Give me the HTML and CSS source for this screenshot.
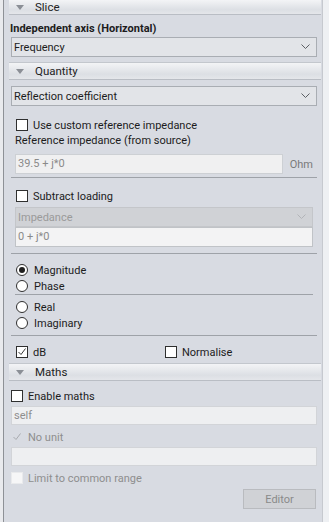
FILE: index.html
```html
<!DOCTYPE html>
<html lang="en">
<head>
  <meta charset="UTF-8">
  <title>Slice settings</title>
  <link rel="stylesheet" href="styles.css">
</head>
<body>
  <div class="window">
    <div class="rail"></div>

    <div class="panel">
      <!-- Slice -->
      <div class="head head-first"><span class="tri"></span>Slice</div>
      <div class="body">
        <div class="label-bold">Independent axis (Horizontal)</div>
        <div class="select mt1"><span>Frequency</span><svg class="chev" width="9" height="6" viewBox="0 0 9 6"><polyline points="0.5,0.5 4.5,4.5 8.5,0.5"/></svg></div>
      </div>

      <!-- Quantity -->
      <div class="head mt5"><span class="tri"></span>Quantity</div>
      <div class="body">
        <div class="select mt6"><span>Reflection coefficient</span><svg class="chev" width="9" height="6" viewBox="0 0 9 6"><polyline points="0.5,0.5 4.5,4.5 8.5,0.5"/></svg></div>

        <div class="group">
          <div class="row mt11"><span class="box"></span>Use custom reference impedance</div>
          <div class="row row-label">Reference impedance (from source)</div>
          <div class="field-line mt6">
            <div class="field field-dim">39.5 + j*0</div>
            <span class="unit">Ohm</span>
          </div>
        </div>

        <div class="sep mt3"></div>

        <div class="group">
          <div class="row mt10"><span class="box"></span>Subtract loading</div>
          <div class="select select-off mt3"><span>Impedance</span><svg class="chev" width="9" height="6" viewBox="0 0 9 6"><polyline points="0.5,0.5 4.5,4.5 8.5,0.5"/></svg></div>
          <div class="field field-soft">0 + j*0</div>
        </div>

        <div class="sep mt6"></div>

        <div class="group">
          <div class="row mt8"><span class="radio on"></span>Magnitude</div>
          <div class="row"><span class="radio"></span>Phase</div>
          <div class="sep"></div>
          <div class="row mt4"><span class="radio"></span>Real</div>
          <div class="row"><span class="radio"></span>Imaginary</div>
        </div>

        <div class="sep mt4"></div>

        <div class="group">
          <div class="row mt8">
            <div class="pair"><span class="box"><svg width="10" height="10" viewBox="0 0 10 10"><polyline points="1.5,5 4,7.5 8.5,1.5"/></svg></span>dB</div>
            <div class="pair"><span class="box"></span>Normalise</div>
          </div>
        </div>
      </div>

      <!-- Maths -->
      <div class="head mt3"><span class="tri"></span>Maths</div>
      <div class="body">
        <div class="row row-tight mt7"><span class="box"></span>Enable maths</div>
        <div class="field field-off mt2">self</div>
        <div class="row row-tight row-off mt4"><span class="box box-off"><svg width="10" height="10" viewBox="0 0 10 10"><polyline points="1.5,5 4,7.5 8.5,1.5"/></svg></span>No unit</div>
        <div class="field field-off mt2"></div>
        <div class="row row-tight row-off mt4"><span class="box box-blank"></span>Limit to common range</div>
        <div class="actions mt3"><button class="btn" disabled>Editor</button></div>
      </div>
    </div>

    <div class="gutter"></div>
  </div>
</body>
</html>
```

FILE: styles.css
```css
/* Panel de propiedades, estilo Windows clasico */
body {
  margin: 0;
  font-family: Roboto, "Noto Sans", sans-serif;
  font-size: 11px;
  color: #1c1c1c;
  background: #eef0f2;
}

.window {
  display: flex;
  height: 522px;
  overflow: hidden;
}

.rail {
  width: 3px;
  background: #e9eaed;
  border-right: 1px solid #8e9196;
}

.panel {
  width: 318px;
  background: #d8dbe2;
}

.gutter {
  flex: 1;
  background: #eef0f3;
  border-left: 1px solid #c6c9cf;
}

/* Cabeceras de seccion */
.head {
  display: flex;
  align-items: center;
  height: 18px;
  margin-left: 5px;
  margin-right: 1px;
  padding-left: 7px;
  box-sizing: border-box;
  background: linear-gradient(#f3f4f6, #dcdfe4 70%, #e4e6ea);
  border-top: 1px solid #c3c7cd;
  border-bottom: 1px solid #b9bdc4;
  color: #222;
  font-size: 11.5px;
}

.head-first {
  height: 15px;
  border-top: none;
}

.tri {
  width: 0;
  height: 0;
  border-left: 4px solid transparent;
  border-right: 4px solid transparent;
  border-top: 5px solid #8b8f96;
  margin-right: 11px;
}

.body {
  padding: 0 5px 0 7px;
}

.label-bold {
  font-weight: bold;
  height: 14px;
  line-height: 14px;
  margin-top: 7px;
  margin-left: -1px;
}

/* Desplegables y campos */
.select {
  display: flex;
  align-items: center;
  justify-content: space-between;
  height: 20px;
  box-sizing: border-box;
  padding: 0 6px 0 2px;
  border: 1px solid #a9adb3;
  background: #e2e4e8;
}

.chev {
  fill: none;
  stroke: #5c5f64;
  stroke-width: 1;
}

.select-off {
  background: #d0d2d6;
  border-color: #c4c6ca;
  color: #9a9a9a;
}

.select-off .chev {
  stroke: #b2b4b8;
}

.field {
  height: 20px;
  line-height: 18px;
  box-sizing: border-box;
  padding: 0 2px;
  border: 1px solid #b8bbc0;
  background: #f3f3f4;
  color: #8a8a8a;
}

.field-line {
  display: flex;
  align-items: center;
  gap: 7px;
}

.field-dim {
  width: 270px;
  background: #f0f0f1;
  border-color: #cdd0d4;
}

.unit {
  color: #7a7a7a;
}

.field-soft {
  border-color: #c0c3c7;
}

.field-off {
  height: 19px;
  line-height: 17px;
  background: #eeeff1;
  border-color: #d2d4d8;
  color: #8e8e8e;
}

/* Grupos internos */
.group {
  padding: 0 4px;
}

.sep {
  height: 1px;
  background: #9ea2a8;
}

.row {
  display: flex;
  align-items: center;
  height: 16px;
}

.row-label {
  height: 15px;
}

.row-tight .box {
  margin-left: 0;
  margin-right: 5px;
}

.row-off {
  color: #8e8e8e;
}

.pair {
  display: flex;
  align-items: center;
  width: 155px;
}

.box {
  width: 10px;
  height: 10px;
  margin-left: 1px;
  margin-right: 5px;
  border: 1px solid #2f2f2f;
  background: #fff;
  display: flex;
  align-items: center;
  justify-content: center;
  flex-shrink: 0;
}

.box svg {
  fill: none;
  stroke: #3a3a3a;
  stroke-width: 1;
}

.box-off {
  border-color: transparent;
  background: transparent;
}

.box-off svg {
  stroke: #a9abb0;
}

.box-blank {
  border-color: #e9eaec;
  background: #f6f6f7;
}

.radio {
  width: 10px;
  height: 10px;
  margin-left: 1px;
  margin-right: 6px;
  border: 1px solid #2f2f2f;
  border-radius: 50%;
  background: #fff;
  display: flex;
  align-items: center;
  justify-content: center;
}

.radio.on::after {
  content: "";
  width: 6px;
  height: 6px;
  border-radius: 50%;
  background: #1f1f1f;
}

/* Boton */
.actions {
  display: flex;
  justify-content: flex-end;
}

.btn {
  width: 73px;
  height: 20px;
  font: inherit;
  color: #8a8a8a;
  background: #d0d2d6;
  border: 1px solid #b9bbbf;
  margin-right: 1px;
}

/* Separaciones */
.mt1 { margin-top: 1px; }
.mt2 { margin-top: 2px; }
.mt3 { margin-top: 3px; }
.mt4 { margin-top: 4px; }
.mt5 { margin-top: 5px; }
.mt6 { margin-top: 6px; }
.mt7 { margin-top: 7px; }
.mt8 { margin-top: 8px; }
.mt10 { margin-top: 10px; }
.mt11 { margin-top: 11px; }
```
